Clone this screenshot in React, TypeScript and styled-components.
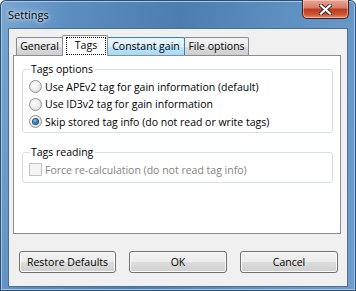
import React from "react";
import styled, { createGlobalStyle, css } from "styled-components";

const GlobalStyle = createGlobalStyle`
    html, body {
        margin: 0;
        padding: 0;
    }
    body {
        width: 356px;
        height: 291px;
        overflow: hidden;
        font-family: "Open Sans", "Noto Sans", sans-serif;
        font-size: 10.5px;
        color: #000;
    }
`;

const Frame = styled.div`
    width: 356px;
    height: 291px;
    box-sizing: border-box;
    display: flex;
    flex-direction: column;
    background: linear-gradient(100deg, #7aa7d3 0%, #5b8dc0 18%, #4b7db1 45%, #5d8fc1 70%, #6d9dcc 100%);
    border-radius: 6px 6px 0 0;
    box-shadow: inset 0 0 0 1px #2d4f75, inset 0 0 0 2px #a9c7e4;
`;

const TitleBar = styled.div`
    height: 28px;
    display: flex;
    align-items: flex-start;
    justify-content: space-between;
    padding: 0 7px 0 8px;
    flex-shrink: 0;
`;

const Title = styled.span`
    margin-top: 7px;
    font-size: 11px;
    line-height: 15px;
    color: #000;
    text-shadow: 0 0 6px rgba(255, 255, 255, 0.9), 0 0 3px rgba(255, 255, 255, 0.9);
`;

const CloseButton = styled.div`
    width: 47px;
    height: 19px;
    box-sizing: border-box;
    border: 1px solid #4a1c16;
    border-top: none;
    border-radius: 0 0 5px 5px;
    background: linear-gradient(to bottom, #e8a999 0%, #d47a64 45%, #bd3a1e 50%, #cc5331 80%, #e39479 100%);
    box-shadow: inset 0 0 0 1px rgba(255, 210, 200, 0.55);
    display: flex;
    align-items: center;
    justify-content: center;
`;

const Client = styled.div`
    flex: 1;
    margin: 0 8px 4px 8px;
    border: 1px solid #4f6f92;
    background: #f0f0f0;
    display: flex;
    flex-direction: column;
    padding: 6px 6px 0 4px;
`;

const TabRow = styled.div`
    display: flex;
    align-items: flex-end;
    padding-left: 3px;
    height: 21px;
    position: relative;
    z-index: 1;
    margin-bottom: -1px;
`;

const Tab = styled.div<{ $width: number; $selected?: boolean; $hover?: boolean }>`
    box-sizing: border-box;
    width: ${(p) => p.$width}px;
    height: 18px;
    margin: 0 -1px 1px 0;
    display: flex;
    align-items: center;
    justify-content: center;
    border: 1px solid #898c95;
    border-bottom: none;
    border-radius: 2px 2px 0 0;
    background: linear-gradient(to bottom, #f3f3f3 0%, #ebebeb 50%, #dddddd 51%, #cfcfcf 100%);
    white-space: nowrap;
    line-height: 15px;
    ${(p) =>
        p.$hover &&
        css`
            border-color: #3c7fb1;
            background: linear-gradient(to bottom, #eaf6fd 0%, #d9f0fc 50%, #bee6fd 51%, #a7d9f5 100%);
            position: relative;
            z-index: 1;
        `}
    ${(p) =>
        p.$selected &&
        css`
            height: 21px;
            margin-bottom: 0;
            background: #fff;
            position: relative;
            z-index: 2;
            align-items: stretch;
            padding: 1px 1px 1px 3px;
        `}
`;

const FocusRect = styled.span`
    flex: 1;
    display: flex;
    align-items: center;
    justify-content: center;
    outline: 1px dotted #000;
    outline-offset: -1px;
    padding-bottom: 1px;
`;

const Panel = styled.div`
    height: 179px;
    box-sizing: border-box;
    background: #fff;
    border: 1px solid #898c95;
    padding: 6px 7px 0 8px;
    display: flex;
    flex-direction: column;
    gap: 12px;
`;

const Group = styled.fieldset<{ $height: number }>`
    margin: 0;
    height: ${(p) => p.$height}px;
    box-sizing: border-box;
    border: 1px solid #d5dfe5;
    border-radius: 3px;
    padding: 2px 0 0 6px;
    display: flex;
    flex-direction: column;
`;

const Legend = styled.legend`
    padding: 0 2px 0 1px;
    margin-left: 1px;
    line-height: 14px;
    color: #000;
`;

const OptionRow = styled.label<{ $disabled?: boolean }>`
    display: flex;
    align-items: center;
    gap: 3px;
    height: 17.5px;
    color: ${(p) => (p.$disabled ? "#838383" : "#000")};
    white-space: nowrap;
`;

const RadioCircle = styled.span<{ $checked?: boolean }>`
    width: 13px;
    height: 13px;
    box-sizing: border-box;
    border-radius: 50%;
    border: 1px solid #8e8f8f;
    background: radial-gradient(circle at 40% 35%, #ffffff 0%, #f0f0f0 40%, #cfcfcf 100%);
    display: flex;
    align-items: center;
    justify-content: center;
    flex-shrink: 0;
    &::after {
        content: "";
        display: ${(p) => (p.$checked ? "block" : "none")};
        width: 5px;
        height: 5px;
        border-radius: 50%;
        background: radial-gradient(circle at 40% 35%, #9cd2f5 0%, #2a7ab8 45%, #14446f 100%);
        box-shadow: 0 0 0 1px #1f4e7a;
    }
`;

const CheckBox = styled.span`
    width: 13px;
    height: 13px;
    box-sizing: border-box;
    border: 1px solid #c3c3c3;
    background: #f4f4f4;
    flex-shrink: 0;
`;

const ButtonRow = styled.div`
    margin-top: auto;
    margin-bottom: 13px;
    display: flex;
    gap: 13px;
    padding-left: 6px;
`;

const Button = styled.div<{ $width: number }>`
    width: ${(p) => p.$width}px;
    height: 22px;
    box-sizing: border-box;
    border: 1px solid #707070;
    border-radius: 3px;
    background: linear-gradient(to bottom, #f2f2f2 0%, #ebebeb 50%, #dddddd 51%, #cfcfcf 100%);
    box-shadow: inset 0 0 0 1px #fcfcfc;
    display: flex;
    align-items: center;
    justify-content: center;
`;

const options = [
    "Use APEv2 tag for gain information (default)",
    "Use ID3v2 tag for gain information",
    "Skip stored tag info (do not read or write tags)",
];

export default function App() {
    return (
        <>
            <GlobalStyle />
            <Frame>
                <TitleBar>
                    <Title>Settings</Title>
                    <CloseButton>
                        <svg width="13" height="11" viewBox="0 0 13 11">
                            <path
                                d="M2 1.5 L11 9.5 M11 1.5 L2 9.5"
                                stroke="#3b2a27"
                                strokeWidth="4"
                                strokeLinecap="square"
                            />
                            <path
                                d="M2 1.5 L11 9.5 M11 1.5 L2 9.5"
                                stroke="#fff"
                                strokeWidth="2.2"
                                strokeLinecap="square"
                            />
                        </svg>
                    </CloseButton>
                </TitleBar>
                <Client>
                    <TabRow>
                        <Tab $width={47}>General</Tab>
                        <Tab $width={46} $selected>
                            <FocusRect>Tags</FocusRect>
                        </Tab>
                        <Tab $width={78} $hover>
                            Constant gain
                        </Tab>
                        <Tab $width={65}>File options</Tab>
                    </TabRow>
                    <Panel>
                        <Group $height={71}>
                            <Legend>Tags options</Legend>
                            {options.map((o, i) => (
                                <OptionRow key={o}>
                                    <RadioCircle $checked={i === 2} />
                                    {o}
                                </OptionRow>
                            ))}
                        </Group>
                        <Group $height={38}>
                            <Legend>Tags reading</Legend>
                            <OptionRow $disabled>
                                <CheckBox />
                                Force re-calculation (do not read tag info)
                            </OptionRow>
                        </Group>
                    </Panel>
                    <ButtonRow>
                        <Button $width={97}>Restore Defaults</Button>
                        <Button $width={98}>OK</Button>
                        <Button $width={98}>Cancel</Button>
                    </ButtonRow>
                </Client>
            </Frame>
        </>
    );
}
